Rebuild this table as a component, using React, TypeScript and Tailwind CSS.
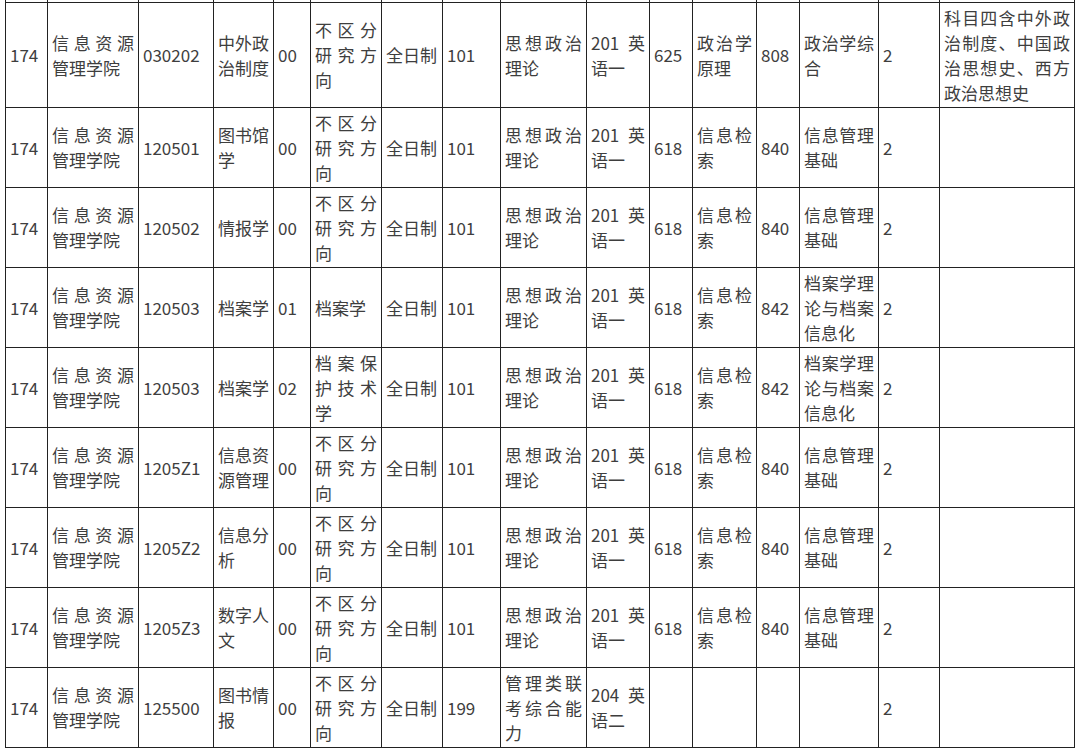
const COLS = [42, 91, 75, 60, 37, 71, 61, 58, 86, 63, 43, 64, 43, 79, 61, 135]

const base = ['174', '信息资源管理学院']

const ROWS: string[][] = [
  [...base, '030202', '中外政治制度', '00', '不区分研究方向', '全日制', '101', '思想政治理论', '201 英语一', '625', '政治学原理', '808', '政治学综合', '2', '科目四含中外政治制度、中国政治思想史、西方政治思想史'],
  [...base, '120501', '图书馆学', '00', '不区分研究方向', '全日制', '101', '思想政治理论', '201 英语一', '618', '信息检索', '840', '信息管理基础', '2', ''],
  [...base, '120502', '情报学', '00', '不区分研究方向', '全日制', '101', '思想政治理论', '201 英语一', '618', '信息检索', '840', '信息管理基础', '2', ''],
  [...base, '120503', '档案学', '01', '档案学', '全日制', '101', '思想政治理论', '201 英语一', '618', '信息检索', '842', '档案学理论与档案信息化', '2', ''],
  [...base, '120503', '档案学', '02', '档案保护技术学', '全日制', '101', '思想政治理论', '201 英语一', '618', '信息检索', '842', '档案学理论与档案信息化', '2', ''],
  [...base, '1205Z1', '信息资源管理', '00', '不区分研究方向', '全日制', '101', '思想政治理论', '201 英语一', '618', '信息检索', '840', '信息管理基础', '2', ''],
  [...base, '1205Z2', '信息分析', '00', '不区分研究方向', '全日制', '101', '思想政治理论', '201 英语一', '618', '信息检索', '840', '信息管理基础', '2', ''],
  [...base, '1205Z3', '数字人文', '00', '不区分研究方向', '全日制', '101', '思想政治理论', '201 英语一', '618', '信息检索', '840', '信息管理基础', '2', ''],
  [...base, '125500', '图书情报', '00', '不区分研究方向', '全日制', '199', '管理类联考综合能力', '204 英语二', '', '', '', '', '2', ''],
]

export default function App() {
  return (
    <div
      className="min-h-screen w-[1080px] overflow-hidden bg-white pl-[5px] text-[#3e3e3e]"
      style={{ fontFamily: '"Noto Sans CJK SC", "Noto Sans", sans-serif' }}
    >
      <table className="w-[1069px] table-fixed border-collapse text-[17px] leading-[25px]">
        <colgroup>
          {COLS.map((w, i) => (
            <col key={i} style={{ width: w }} />
          ))}
        </colgroup>
        <tbody>
          {/* tail of the row above, cut off by the screenshot */}
          <tr className="h-[2px]">
            {COLS.map((_, c) => (
              <td key={c} className="border border-t-0 border-[#222] p-0" />
            ))}
          </tr>
          {ROWS.map((row, r) => (
            <tr key={r} className="h-[80px]">
              {row.map((cell, c) => (
                <td
                  key={c}
                  className="border border-[#222] px-[4px] py-[2px] text-justify align-middle break-all"
                >
                  {cell}
                </td>
              ))}
            </tr>
          ))}
        </tbody>
      </table>
    </div>
  )
}
